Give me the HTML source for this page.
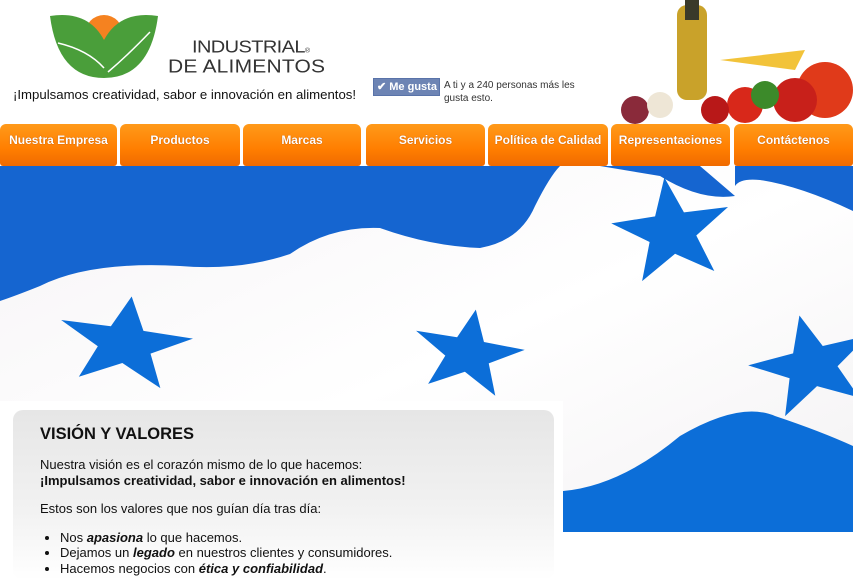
<!DOCTYPE html>
<html><head><meta charset="utf-8"><style>
*{margin:0;padding:0;box-sizing:border-box}
body{width:853px;height:568px;overflow:hidden;background:#fff;font-family:"Liberation Sans",Arial,sans-serif;position:relative}
.nav a{position:absolute;top:124px;height:42px;background:linear-gradient(#ff9a1a,#ff7e00 60%,#f06a00);border-radius:6px 6px 3px 3px;color:#fff;font-weight:bold;font-size:12px;text-align:center;line-height:32px;text-decoration:none;text-shadow:0 0 1px #a04000}
.box{position:absolute;left:13px;top:410px;width:541px;height:170px;border-radius:10px;background:linear-gradient(#e6e6e6,#f2f2f2 60%,#fff);padding:15px 27px;color:#111;font-size:13px;line-height:15.5px}
</style></head><body>
<svg style="position:absolute;left:48px;top:10px" width="112" height="70" viewBox="0 0 112 70">
<circle cx="56" cy="24" r="19" fill="#f58220"/>
<path d="M2 6 Q40 0 56 30 L56 68 Q10 68 2 6Z" fill="#4a9e3a"/>
<path d="M110 6 Q72 0 56 30 L56 68 Q102 68 110 6Z" fill="#4a9e3a"/>
<path d="M10 33 Q40 40 56 58 M102 22 Q80 45 60 62" stroke="#fff" stroke-width="1.5" fill="none"/>
</svg>
<div style="position:absolute;left:192px;top:37px;font-size:20px;letter-spacing:-0.6px;color:#333;line-height:20px;transform:scaleY(0.9)">INDUSTRIAL<span style="font-size:7px">®</span></div>
<div style="position:absolute;left:168px;top:56px;font-size:21px;letter-spacing:0.2px;color:#333;line-height:22px;transform:scaleY(0.9)">DE ALIMENTOS</div>
<div style="position:absolute;left:13px;top:87px;font-size:13.2px;color:#111">¡Impulsamos creatividad, sabor e innovación en alimentos!</div>
<div style="position:absolute;left:373px;top:78px;width:67px;height:18px;background:#6d84b4;border:1px solid #5973a9;color:#fff;font-size:11px;font-weight:bold;line-height:16px;padding-left:3px">✔ Me gusta</div>
<div style="position:absolute;left:444px;top:79px;font-size:10px;color:#333;line-height:13px;width:150px">A ti y a 240 personas más les gusta esto.</div>
<svg style="position:absolute;left:605px;top:0" width="248" height="124">
<rect x="72" y="5" width="30" height="95" rx="10" fill="#c9a22a"/><rect x="80" y="0" width="14" height="20" fill="#3a3a2a"/>
<path d="M115 60 L200 50 L190 70Z" fill="#f2c33a"/>
<circle cx="220" cy="90" r="28" fill="#e03a1a"/><circle cx="190" cy="100" r="22" fill="#c8201a"/>
<circle cx="140" cy="105" r="18" fill="#d8281a"/><circle cx="160" cy="95" r="14" fill="#3c8a2a"/>
<circle cx="30" cy="110" r="14" fill="#8a2a3a"/><circle cx="55" cy="105" r="13" fill="#eee6d6"/>
<circle cx="110" cy="110" r="14" fill="#b81818"/>
</svg>
<div class="nav">
<a style="left:0;width:117px">Nuestra Empresa</a>
<a style="left:120px;width:120px">Productos</a>
<a style="left:243px;width:118px">Marcas</a>
<a style="left:366px;width:119px">Servicios</a>
<a style="left:488px;width:120px">Política de Calidad</a>
<a style="left:611px;width:119px">Representaciones</a>
<a style="left:734px;width:119px">Contáctenos</a>
</div>
<svg style="position:absolute;left:0;top:166px" width="853" height="402" viewBox="0 0 853 402">
<defs>
<linearGradient id="w" x1="0" y1="0" x2="1" y2="1"><stop offset="0" stop-color="#f6f4f6"/><stop offset=".5" stop-color="#fff"/><stop offset="1" stop-color="#f2f0f2"/></linearGradient>
<clipPath id="c"><path d="M0 0 H853 V366 H563 V235 H0Z"/></clipPath>
</defs>
<g clip-path="url(#c)">
<rect width="853" height="402" fill="url(#w)"/>
<path d="M0 0 H560 Q550 10 535 40 Q520 75 480 82 Q430 80 380 62 Q330 60 290 88 Q240 105 180 100 Q90 95 40 120 Q15 130 0 135Z" fill="#1565d0"/>
<path d="M600 0 H700 L735 30 Q700 35 660 10Z" fill="#1565d0"/>
<path d="M735 0 H853 V45 Q800 20 760 14 Q740 12 735 20Z" fill="#1565d0"/>
<path d="M563 325 Q620 320 680 270 Q740 235 775 250 Q820 265 853 280 V366 H563Z" fill="#0c6ed8"/>
<g fill="#0c6ed8">
<polygon transform="translate(672,66) rotate(-8) scale(62,55)" points="0,-1 0.235,-0.324 0.951,-0.309 0.380,0.124 0.588,0.809 0,0.4 -0.588,0.809 -0.380,0.124 -0.951,-0.309 -0.235,-0.324"/>
<polygon transform="translate(125,178) rotate(8) scale(70,48)" points="0,-1 0.235,-0.324 0.951,-0.309 0.380,0.124 0.588,0.809 0,0.4 -0.588,0.809 -0.380,0.124 -0.951,-0.309 -0.235,-0.324"/>
<polygon transform="translate(468,188) rotate(10) scale(58,45)" points="0,-1 0.235,-0.324 0.951,-0.309 0.380,0.124 0.588,0.809 0,0.4 -0.588,0.809 -0.380,0.124 -0.951,-0.309 -0.235,-0.324"/>
<polygon transform="translate(812,200) rotate(-14) scale(65,52)" points="0,-1 0.235,-0.324 0.951,-0.309 0.380,0.124 0.588,0.809 0,0.4 -0.588,0.809 -0.380,0.124 -0.951,-0.309 -0.235,-0.324"/>
</g>
</g>
</svg>
<div class="box">
<div style="font-size:16.5px;font-weight:bold;margin-bottom:14px;line-height:18px">VISIÓN Y VALORES</div>
<div>Nuestra visión es el corazón mismo de lo que hacemos:<br><b>¡Impulsamos creatividad, sabor e innovación en alimentos!</b></div>
<div style="margin-top:13px">Estos son los valores que nos guían día tras día:</div>
<ul style="margin-top:13px;padding-left:20px">
<li>Nos <b><i>apasiona</i></b> lo que hacemos.</li>
<li>Dejamos un <b><i>legado</i></b> en nuestros clientes y consumidores.</li>
<li>Hacemos negocios con <b><i>ética y confiabilidad</i></b>.</li>
</ul>
</div>
</body></html>
